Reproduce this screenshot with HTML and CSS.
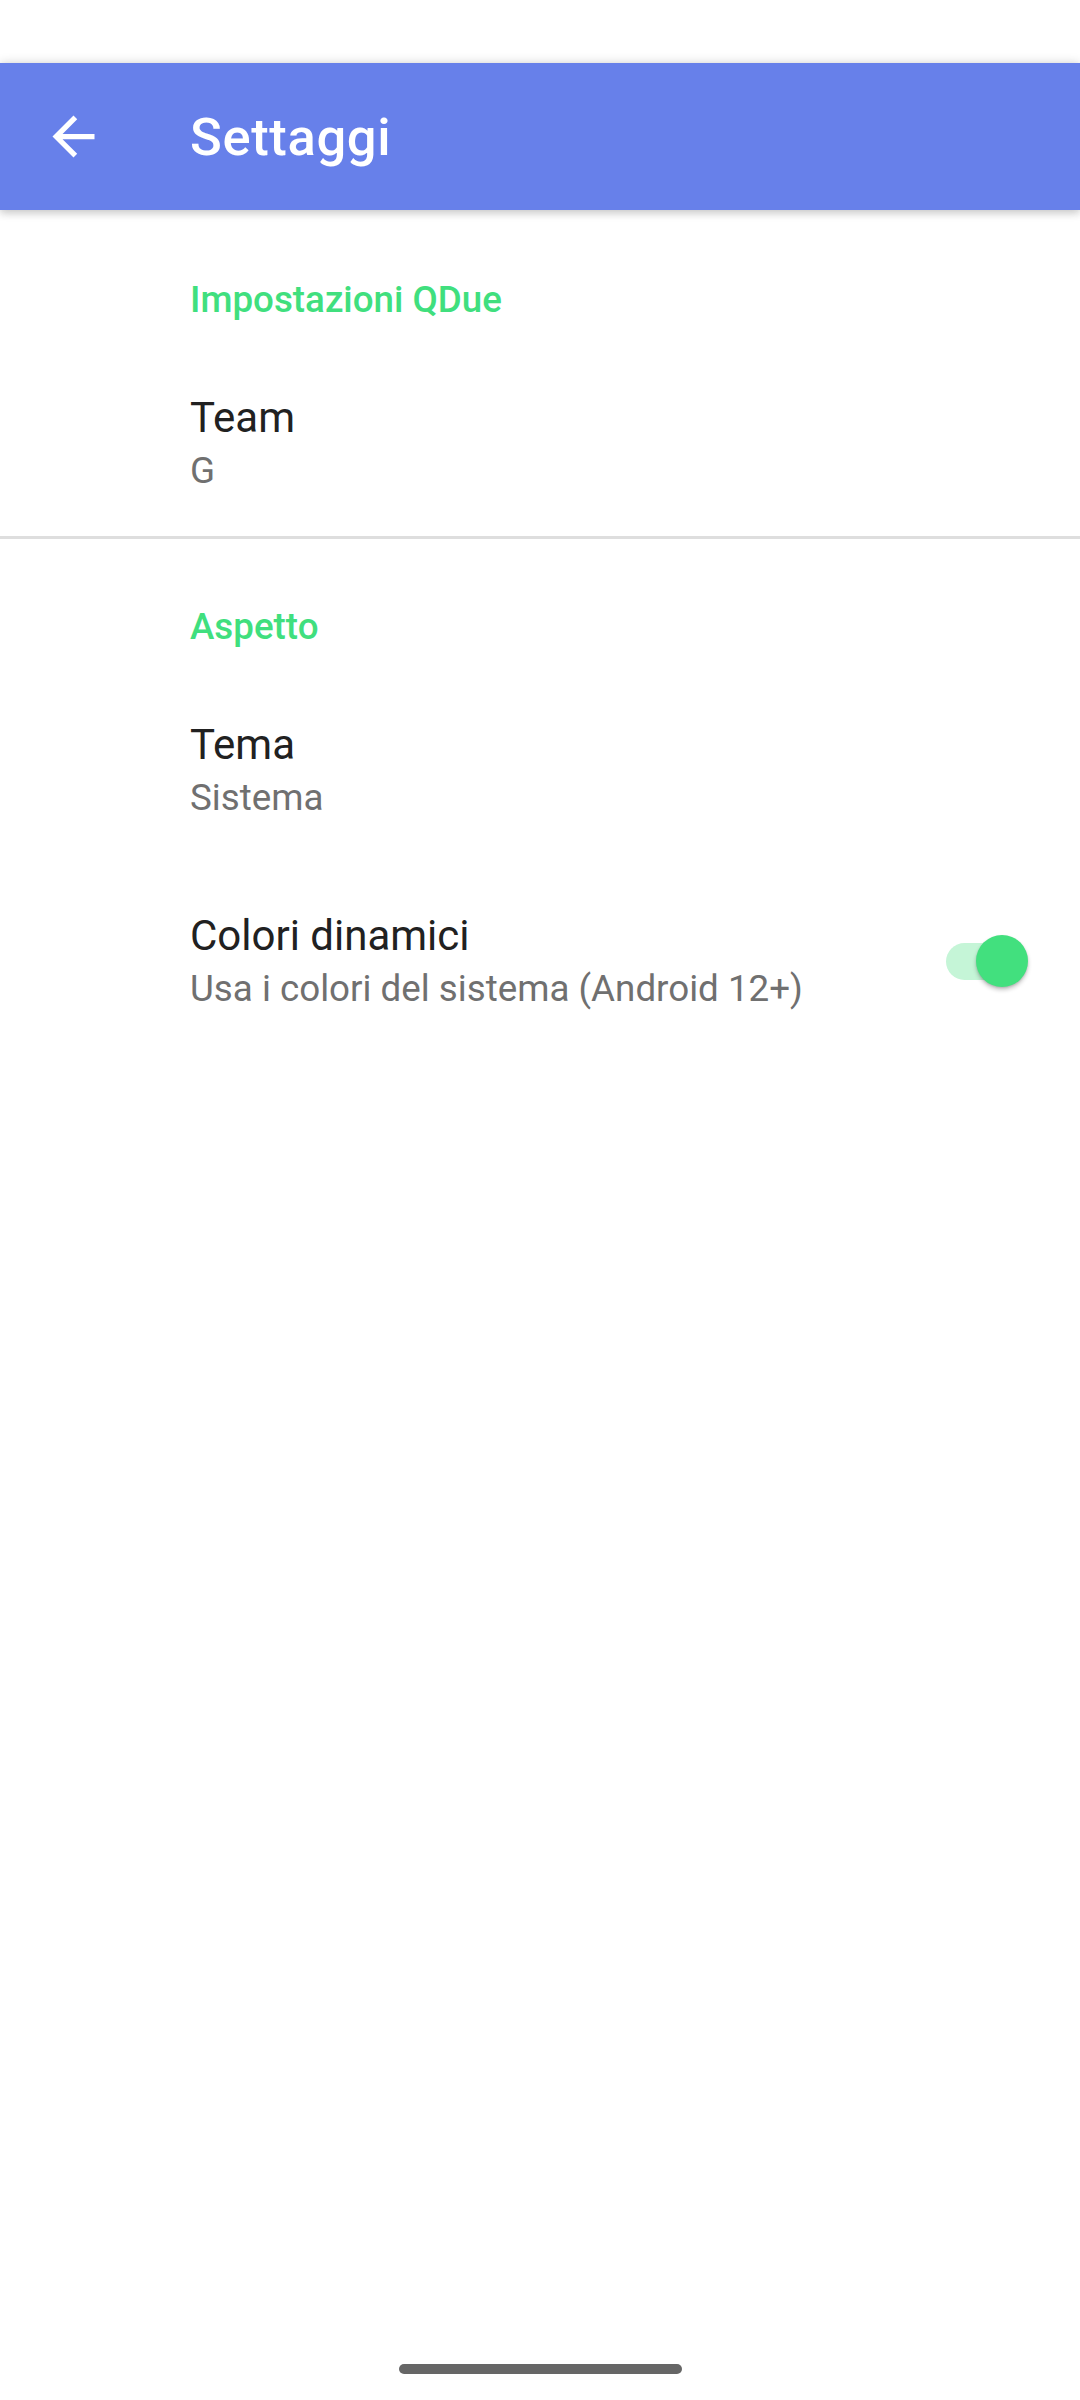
FILE: index.html
```html
<!DOCTYPE html>
<html lang="it">
<head>
<meta charset="utf-8">
<title>Settaggi</title>
<link rel="stylesheet" href="styles.css">
</head>
<body>
<div class="screen">
  <div class="statusbar"></div>
  <header class="appbar">
    <div class="nav-icon">
      <svg viewBox="0 0 24 24" width="63" height="63"><path fill="#fff" d="M20 11H7.83l5.59-5.59L12 4l-8 8 8 8 1.41-1.41L7.83 13H20v-2z"/></svg>
    </div>
    <h1 class="title">Settaggi</h1>
  </header>
  <main class="content">
    <section class="group">
      <div class="category first">Impostazioni QDue</div>
      <div class="pref">
        <div class="pref-text">
          <div class="pref-title">Team</div>
          <div class="pref-summary">G</div>
        </div>
      </div>
    </section>
    <div class="divider"></div>
    <section class="group">
      <div class="category second">Aspetto</div>
      <div class="pref">
        <div class="pref-text">
          <div class="pref-title">Tema</div>
          <div class="pref-summary">Sistema</div>
        </div>
      </div>
      <div class="pref">
        <div class="pref-text">
          <div class="pref-title">Colori dinamici</div>
          <div class="pref-summary">Usa i colori del sistema (Android 12+)</div>
        </div>
        <div class="switch on">
          <div class="track"></div>
          <div class="thumb"></div>
        </div>
      </div>
    </section>
  </main>
  <div class="navbar"><div class="handle"></div></div>
</div>
</body>
</html>
```
FILE: styles.css
```css
html, body {
  margin: 0;
  padding: 0;
  background: #ffffff;
}
body {
  font-family: Roboto, "Noto Sans", "Liberation Sans", sans-serif;
}
.screen {
  width: 1080px;
  height: 2400px;
  display: flex;
  flex-direction: column;
  overflow: hidden;
}
.statusbar {
  height: 63px;
  background: #ffffff;
  flex: none;
}
.appbar {
  position: relative;
  z-index: 1;
  height: 147px;
  flex: none;
  background: #6780ea;
  display: flex;
  align-items: center;
  box-shadow: 0 0 10px rgba(0,0,0,0.16), 0 4px 8px rgba(0,0,0,0.12);
}
.nav-icon {
  width: 63px;
  height: 63px;
  margin-left: 42px;
  display: flex;
}
.title {
  margin: 0 0 0 85px;
  font-size: 52.5px;
  font-weight: 500;
  letter-spacing: 0.65px;
  color: #ffffff;
  line-height: 64px;
}
.content {
  flex: none;
}
.category {
  padding: 0 0 21px 190px;
  font-size: 36.75px;
  line-height: 48px;
  font-weight: 500;
  color: #40df7e;
}
.category.first { padding-top: 66px; }
.category.second { padding-top: 64px; }
.pref {
  display: flex;
  align-items: center;
  padding: 45px 52px 41px 190px;
}
.pref-text {
  flex: 1;
}
.pref-title {
  font-size: 42px;
  line-height: 56px;
  color: #212121;
}
.pref-summary {
  margin-top: 1px;
  font-size: 36.75px;
  line-height: 48px;
  color: #707070;
}
.divider {
  height: 3px;
  background: #dedede;
}
.switch {
  position: relative;
  width: 82px;
  height: 52px;
  flex: none;
}
.track {
  position: absolute;
  left: 0;
  top: 8px;
  width: 74px;
  height: 37px;
  border-radius: 18.5px;
  background: #c5f5d7;
}
.thumb {
  position: absolute;
  right: 0;
  top: 0;
  width: 52px;
  height: 52px;
  border-radius: 50%;
  background: #42e07e;
  box-shadow: 0 3px 4px rgba(0,0,0,0.22), 0 1px 2px rgba(0,0,0,0.12);
}
.navbar {
  margin-top: auto;
  display: flex;
  justify-content: center;
  padding-bottom: 26px;
}
.handle {
  width: 283px;
  height: 10px;
  border-radius: 5px;
  background: #666666;
}
```
